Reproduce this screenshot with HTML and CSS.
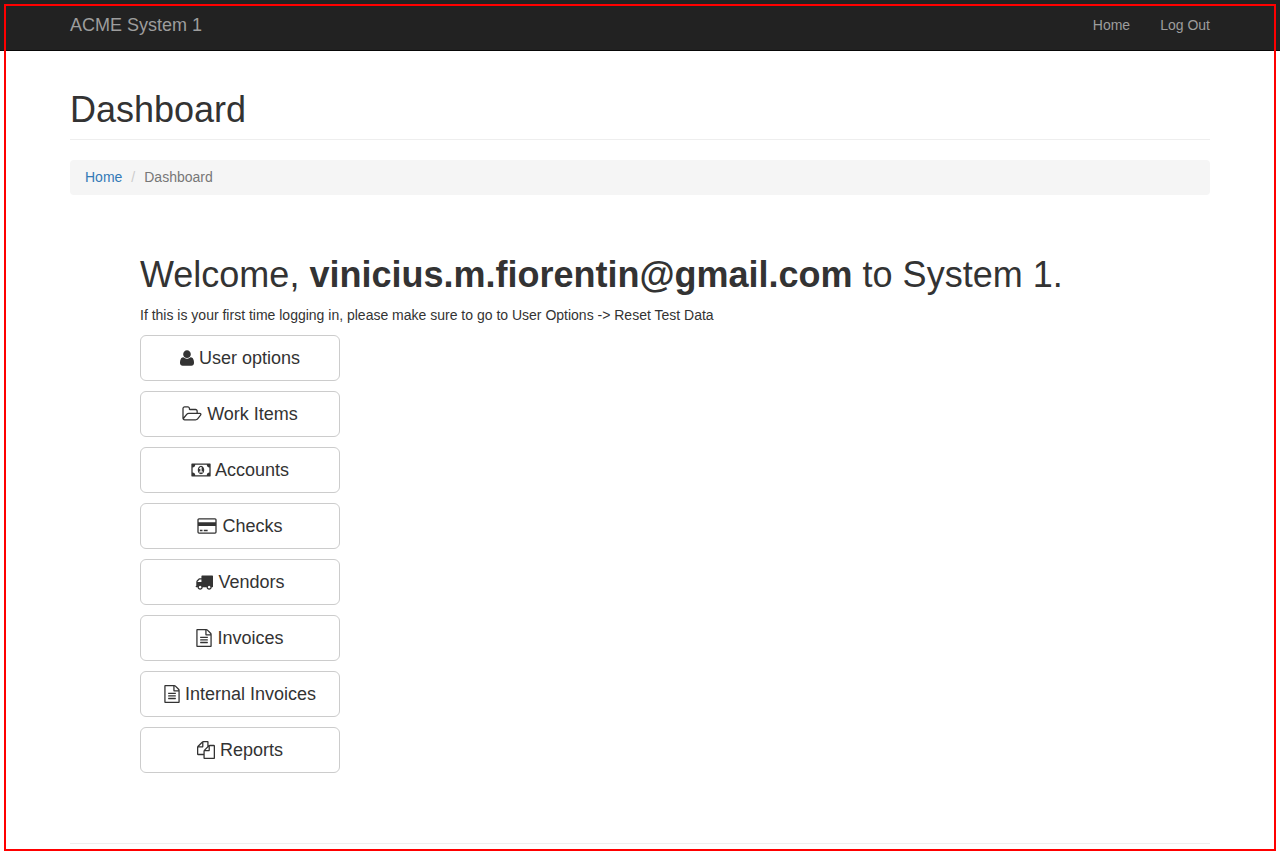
FILE: index.html
```html
<!DOCTYPE html>
<html lang="en">
<head>
<meta charset="utf-8">
<title>ACME System 1 - Dashboard</title>
<link rel="stylesheet" href="styles.css">
</head>
<body>
<header class="navbar">
  <div class="container navbar-inner">
    <a class="brand" href="#">ACME System 1</a>
    <nav class="nav-links">
      <a href="#">Home</a>
      <a href="#">Log Out</a>
    </nav>
  </div>
</header>

<div class="container page">
  <h1 class="page-header">Dashboard</h1>
  <ol class="breadcrumb">
    <li><a href="#">Home</a></li>
    <li class="active">Dashboard</li>
  </ol>

  <main class="content">
    <h1 class="welcome">Welcome, <strong>vinicius.m.fiorentin@gmail.com</strong> to System 1.</h1>
    <p class="hint">If this is your first time logging in, please make sure to go to User Options -&gt; Reset Test Data</p>
    <div class="menu">
      <button type="button" class="btn"><svg class="icon w14" viewBox="192 0 1408 1792" aria-hidden="true"><path d="M1600 1405q0 120-73 189.5t-194 69.5h-874q-121 0-194-69.5t-73-189.5q0-53 3.5-103.5t14-109 26.5-108.5 43-97.5 62-81 85.5-53.5 111.5-20q9 0 42 21.5t74.5 48 108 48 133.5 21.5 133.5-21.5 108-48 74.5-48 42-21.5q61 0 111.5 20t85.5 53.5 62 81 43 97.5 26.5 108.5 14 109 3.5 103.5zm-320-893q0 159-112.5 271.5t-271.5 112.5-271.5-112.5-112.5-271.5 112.5-271.5 271.5-112.5 271.5 112.5 112.5 271.5z"/></svg> User options</button>
      <button type="button" class="btn"><svg class="icon w20" viewBox="64 0 1920 1792" aria-hidden="true"><path d="M1845 931q0-35-53-35h-1088q-40 0-85.5 21.5t-71.5 52.5l-294 363q-18 24-18 40 0 35 53 35h1088q40 0 86-22t71-53l294-363q18-22 18-39zm-1141-163h768v-160q0-40-28-68t-68-28h-576q-40 0-68-28t-28-68v-64q0-40-28-68t-68-28h-320q-40 0-68 28t-28 68v853l256-315q44-53 116-87.5t140-34.5zm1269 163q0 62-46 120l-295 363q-43 53-116 87.5t-140 34.5h-1088q-92 0-158-66t-66-158v-960q0-92 66-158t158-66h320q92 0 158 66t66 158v32h544q92 0 158 66t66 158v160h192q54 0 99 24.5t67 70.5q15 32 15 68z"/></svg> Work Items</button>
      <button type="button" class="btn"><svg class="icon w20" viewBox="0 0 1920 1792" aria-hidden="true"><path d="M768 1152h384v-96h-128v-448h-114l-148 137 77 80q42-37 55-57h2v288h-128v96zm512-256q0 70-21 142t-59.5 134-101.5 101-138 39-138-39-101.5-101-59.5-134-21-142 21-142 59.5-134 101.5-101 138-39 138 39 101.5 101 59.5 134 21 142zm512 256v-512q-106 0-181-75t-75-181h-1152q0 106-75 181t-181 75v512q106 0 181 75t75 181h1152q0-106 75-181t181-75zm128-832v1152q0 26-19 45t-45 19h-1792q-26 0-45-19t-19-45v-1152q0-26 19-45t45-19h1792q26 0 45 19t19 45z"/></svg> Accounts</button>
      <button type="button" class="btn"><svg class="icon w20" viewBox="0 0 1920 1792" aria-hidden="true"><path d="M1760 128q66 0 113 47t47 113v1216q0 66-47 113t-113 47h-1600q-66 0-113-47t-47-113v-1216q0-66 47-113t113-47h1600zm-1600 128q-13 0-22.5 9.5t-9.5 22.5v224h1664v-224q0-13-9.5-22.5t-22.5-9.5h-1600zm1600 1280q13 0 22.5-9.5t9.5-22.5v-608h-1664v608q0 13 9.5 22.5t22.5 9.5h1600zm-1504-128v-128h256v128h-256zm384 0v-128h384v128h-384z"/></svg> Checks</button>
      <button type="button" class="btn"><svg class="icon w18 flip" viewBox="0 0 1792 1792" aria-hidden="true"><path d="M640 1408q0-52-38-90t-90-38-90 38-38 90 38 90 90 38 90-38 38-90zm-384-512h384v-256h-158q-13 0-22 9l-195 195q-9 9-9 22v30zm1280 512q0-52-38-90t-90-38-90 38-38 90 38 90 90 38 90-38 38-90zm256-1088v1024q0 15-4 26.5t-13.5 18.5-16.5 11.5-23.5 6-22.5 2-25.5 0-22.5-.5q0 106-75 181t-181 75-181-75-75-181h-384q0 106-75 181t-181 75-181-75-75-181h-64q-3 0-22.5.5t-25.5 0-22.5-2-23.5-6-16.5-11.5-13.5-18.5-4-26.5q0-26 19-45t45-19v-320q0-8-.5-35t0-38 2.5-34.5 6.5-37 14-30.5 22.5-30l198-198q19-19 50.5-32t58.5-13h160v-192q0-26 19-45t45-19h1024q26 0 45 19t19 45z"/></svg> Vendors</button>
      <button type="button" class="btn"><svg class="icon w16" viewBox="128 0 1536 1792" aria-hidden="true"><path d="M1596 380q28 28 48 76t20 88v1152q0 40-28 68t-68 28h-1344q-40 0-68-28t-28-68v-1600q0-40 28-68t68-28h896q40 0 88 20t76 48zm-444-244v376h376q-10-29-22-41l-313-313q-12-12-41-22zm384 1528v-1024h-416q-40 0-68-28t-28-68v-416h-768v1536h1280zm-1024-864q0-14 9-23t23-9h704q14 0 23 9t9 23v64q0 14-9 23t-23 9h-704q-14 0-23-9t-9-23v-64zm736 224q14 0 23 9t9 23v64q0 14-9 23t-23 9h-704q-14 0-23-9t-9-23v-64q0-14 9-23t23-9h704zm0 256q14 0 23 9t9 23v64q0 14-9 23t-23 9h-704q-14 0-23-9t-9-23v-64q0-14 9-23t23-9h704z"/></svg> Invoices</button>
      <button type="button" class="btn"><svg class="icon w16" viewBox="128 0 1536 1792" aria-hidden="true"><path d="M1596 380q28 28 48 76t20 88v1152q0 40-28 68t-68 28h-1344q-40 0-68-28t-28-68v-1600q0-40 28-68t68-28h896q40 0 88 20t76 48zm-444-244v376h376q-10-29-22-41l-313-313q-12-12-41-22zm384 1528v-1024h-416q-40 0-68-28t-28-68v-416h-768v1536h1280zm-1024-864q0-14 9-23t23-9h704q14 0 23 9t9 23v64q0 14-9 23t-23 9h-704q-14 0-23-9t-9-23v-64zm736 224q14 0 23 9t9 23v64q0 14-9 23t-23 9h-704q-14 0-23-9t-9-23v-64q0-14 9-23t23-9h704zm0 256q14 0 23 9t9 23v64q0 14-9 23t-23 9h-704q-14 0-23-9t-9-23v-64q0-14 9-23t23-9h704z"/></svg> Internal Invoices</button>
      <button type="button" class="btn"><svg class="icon w18" viewBox="0 0 1792 1792" aria-hidden="true"><path d="M1696 384q40 0 68 28t28 68v1216q0 40-28 68t-68 28h-960q-40 0-68-28t-28-68v-288h-544q-40 0-68-28t-28-68v-672q0-40 20-88t48-76l408-408q28-28 76-48t88-20h416q40 0 68 28t28 68v328q68-40 128-40h416zm-544 213l-299 299h299v-299zm-640-384l-299 299h299v-299zm196 647l316-316v-416h-384v416q0 40-28 68t-68 28h-416v640h512v-256q0-40 20-88t48-76zm956 804v-1152h-384v416q0 40-28 68t-68 28h-416v640h896z"/></svg> Reports</button>
    </div>
  </main>
  <hr class="divider">
</div>
<div class="frame"></div>
</body>
</html>
```
FILE: styles.css
```css
* {
  box-sizing: border-box;
}

body {
  margin: 0;
  font-family: "Liberation Sans", Arial, sans-serif;
  font-size: 14px;
  line-height: 20px;
  color: #333;
  background: #fff;
}

a {
  color: #337ab7;
  text-decoration: none;
}

.container {
  max-width: 1170px;
  margin: 0 auto;
  padding: 0 15px;
}

.navbar {
  background: #222;
  border-bottom: 1px solid #080808;
}

.navbar-inner {
  display: flex;
  justify-content: space-between;
  align-items: center;
}

.navbar a {
  padding: 15px 0;
  color: #9d9d9d;
}

.navbar .brand {
  font-size: 18px;
}

.nav-links {
  display: flex;
  gap: 30px;
}

.page {
  padding-top: 39px;
}

h1 {
  margin: 0;
  font-size: 36px;
  line-height: 40px;
  font-weight: 400;
}

.page-header {
  padding-bottom: 9px;
  margin-bottom: 20px;
  border-bottom: 1px solid #eee;
}

.breadcrumb {
  display: flex;
  margin: 0;
  padding: 7px 15px 8px;
  list-style: none;
  background: #f5f5f5;
  border-radius: 4px;
}

.breadcrumb .active {
  color: #777;
}

.breadcrumb .active::before {
  content: "/";
  padding: 0 9px;
  color: #ccc;
}

.content {
  padding: 60px 70px 70px;
}

.welcome {
  margin-bottom: 10px;
}

.hint {
  margin: 0 0 10px;
}

.menu {
  display: flex;
  flex-direction: column;
  align-items: flex-start;
  gap: 10px;
}

.btn {
  width: 200px;
  padding: 10px 16px;
  font-family: inherit;
  font-size: 18px;
  line-height: 24px;
  color: #333;
  background: #fff;
  border: 1px solid #ccc;
  border-radius: 6px;
  cursor: pointer;
}

.icon {
  height: 18px;
  vertical-align: -3px;
  fill: currentColor;
}

.w14 {
  width: 14px;
}

.w16 {
  width: 16px;
}

.w18 {
  width: 18px;
}

.w20 {
  width: 20px;
}

.divider {
  margin: 0;
  border: 0;
  border-top: 1px solid #eee;
}

.frame {
  position: fixed;
  inset: 4px;
  border: 2px solid #f00;
  pointer-events: none;
}
```
